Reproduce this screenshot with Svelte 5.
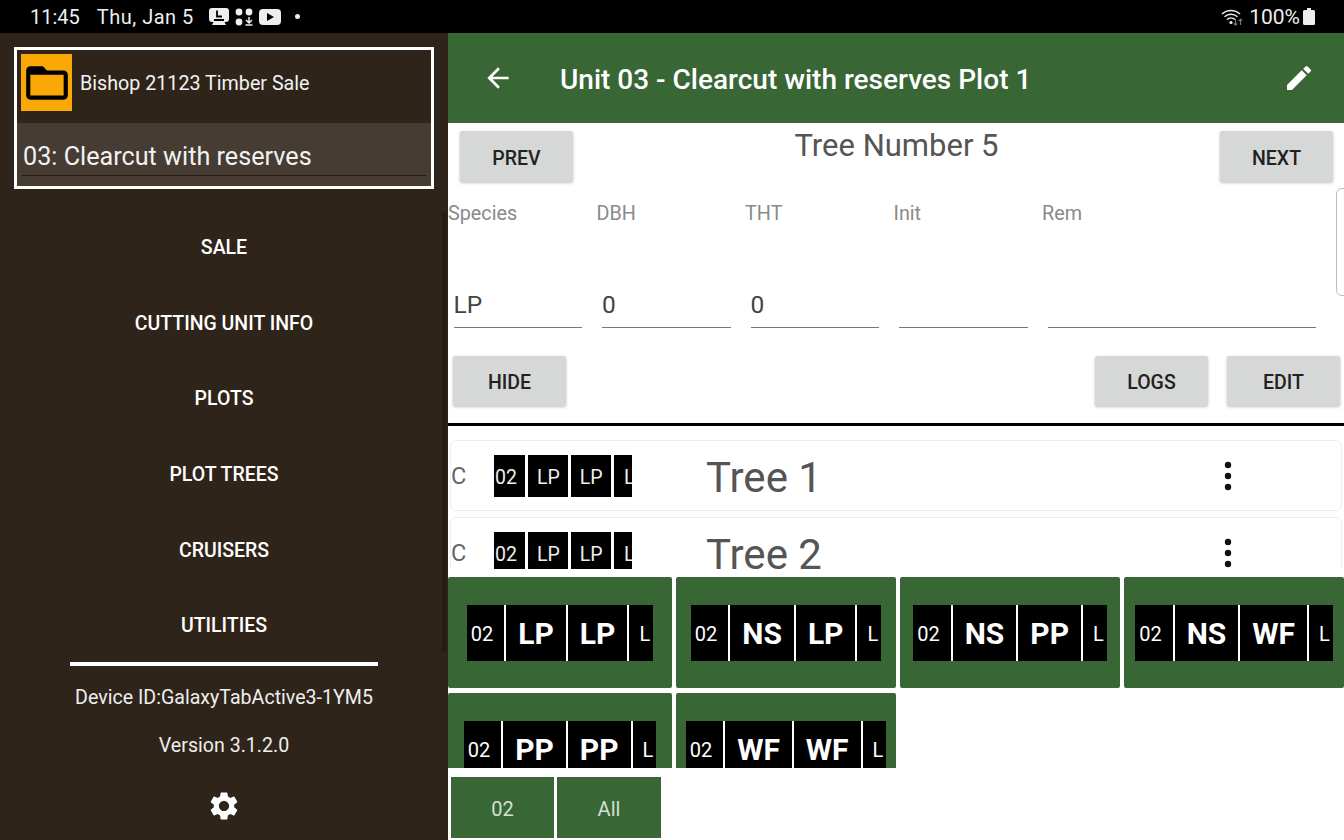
<script>
  const menu = ["SALE", "CUTTING UNIT INFO", "PLOTS", "PLOT TREES", "CRUISERS", "UTILITIES"];
  const fields = [
    { label: "Species", value: "LP" },
    { label: "DBH", value: "0" },
    { label: "THT", value: "0" },
    { label: "Init", value: "" },
    { label: "Rem", value: "" },
  ];
  const trees = ["Tree 1", "Tree 2"];
  const combos = [
    ["LP", "LP"],
    ["NS", "LP"],
    ["NS", "PP"],
    ["NS", "WF"],
    ["PP", "PP"],
    ["WF", "WF"],
  ];
</script>

<div class="page">
  <div class="status">
    <div class="status-left">
      <span class="time">11:45</span>
      <span class="date">Thu, Jan 5</span>
      <svg viewBox="0 0 20 17" width="20" height="17">
        <path d="M3 0h14a3 3 0 0 1 3 3v8a3 3 0 0 1-3 3h-1.500l1.500 3H3l1.500-3H3a3 3 0 0 1-3-3V3a3 3 0 0 1 3-3z" fill="#eee" />
        <path d="M8 2.500v6h5M5 12h10" stroke="#000" stroke-width="1.800" fill="none" />
      </svg>
      <svg viewBox="0 0 18 18" width="18" height="18">
        <circle cx="4" cy="4" r="3.400" fill="#eee" />
        <circle cx="14" cy="4" r="3.400" fill="#eee" />
        <circle cx="4" cy="14" r="3.400" fill="#eee" />
        <path d="M14 9v6M11 12l3 3 3-3M10.500 17h7" stroke="#eee" stroke-width="1.500" fill="none" />
      </svg>
      <svg viewBox="0 0 22 16" width="22" height="16">
        <rect width="22" height="16" rx="4" fill="#eee" />
        <path d="M8 4l7 4-7 4z" fill="#000" />
      </svg>
      <span class="dot"></span>
    </div>
    <div class="status-right">
      <svg viewBox="0 0 22 18" width="22" height="18">
        <path d="M1 6a13 13 0 0 1 18 0M3.500 8.800a9.500 9.500 0 0 1 13 0M6 11.500a6 6 0 0 1 8 0" stroke="#eee" stroke-width="1.500" fill="none" />
        <circle cx="10" cy="14.500" r="1.600" fill="#eee" />
        <path d="M14.500 11v6M12.800 15.400l1.700 1.800 1.700-1.800M19.500 17v-6M17.800 12.800l1.700-1.800 1.700 1.800" stroke="#777" stroke-width="1.200" fill="none" />
      </svg>
      <span class="pct">100%</span>
      <svg viewBox="0 0 12 17" width="12" height="17">
        <path d="M4 0h4v2h2.500a1.500 1.500 0 0 1 1.500 1.500V15.500a1.500 1.500 0 0 1-1.500 1.500h-9A1.500 1.500 0 0 1 0 15.500V3.500A1.500 1.500 0 0 1 1.500 2H4z" fill="#eee" />
      </svg>
    </div>
  </div>

  <div class="body">
    <aside class="drawer">
      <div class="sale-box">
        <div class="sale-row">
          <div class="folder">
            <svg viewBox="0 0 24 24" width="50" height="50">
              <path d="M20 6h-8l-2-2H4c-1.100 0-2 .9-2 2v12c0 1.100.9 2 2 2h16c1.100 0 2-.9 2-2V8c0-1.100-.9-2-2-2zm0 12H4V8h16v10z" fill="#000" />
            </svg>
          </div>
          <span class="sale-name">Bishop 21123 Timber Sale</span>
        </div>
        <div class="unit-row">
          <div class="unit-text">03: Clearcut with reserves</div>
        </div>
      </div>
      <nav class="menu">
        {#each menu as item}
          <div class="menu-item">{item}</div>
        {/each}
      </nav>
      <div class="divider"></div>
      <div class="device">Device ID:GalaxyTabActive3-1YM5</div>
      <div class="version">Version 3.1.2.0</div>
      <div class="gear">
        <svg viewBox="0 0 24 24" width="34" height="34">
          <path d="M19.140 12.940c.04-.3.06-.61.06-.94 0-.32-.02-.64-.07-.94l2.030-1.580a.49.49 0 0 0 .12-.61l-1.920-3.320a.488.488 0 0 0-.59-.22l-2.390.96c-.5-.38-1.030-.7-1.620-.94l-.36-2.540a.484.484 0 0 0-.48-.41h-3.840c-.24 0-.43.17-.47.41l-.36 2.540c-.59.24-1.130.57-1.620.94l-2.390-.96c-.22-.08-.47 0-.59.22L2.740 8.870c-.12.21-.08.47.12.61l2.030 1.580c-.05.3-.09.63-.09.94s.02.64.07.94l-2.030 1.580a.49.49 0 0 0-.12.61l1.920 3.320c.12.22.37.29.59.22l2.390-.96c.5.38 1.030.7 1.620.94l.36 2.540c.05.24.24.41.48.41h3.840c.24 0 .44-.17.47-.41l.36-2.540c.59-.24 1.130-.56 1.620-.94l2.390.96c.22.08.47 0 .59-.22l1.920-3.320c.12-.22.07-.47-.12-.61l-2.010-1.580zM12 15.600c-1.980 0-3.600-1.620-3.600-3.600s1.620-3.600 3.600-3.600 3.600 1.620 3.600 3.600-1.620 3.600-3.600 3.600z" fill="#fff" />
        </svg>
      </div>
      <div class="drawer-scroll"></div>
    </aside>

    <main class="main">
      <header class="appbar">
        <svg viewBox="0 0 24 24" width="32" height="32">
          <path d="M20 11H7.830l5.590-5.590L12 4l-8 8 8 8 1.410-1.410L7.830 13H20v-2z" fill="#fff" />
        </svg>
        <h1>Unit 03 - Clearcut with reserves Plot 1</h1>
        <svg class="pencil" viewBox="0 0 24 24" width="32" height="32">
          <path d="M3 17.250V21h3.750L17.810 9.940l-3.750-3.750L3 17.250zM20.710 7.040a.996.996 0 0 0 0-1.410l-2.340-2.340a.996.996 0 0 0-1.410 0l-1.830 1.830 3.750 3.750 1.830-1.830z" fill="#fff" />
        </svg>
      </header>

      <section class="form">
        <div class="nav-row">
          <button>PREV</button>
          <div class="title">Tree Number 5</div>
          <button>NEXT</button>
        </div>
        <div class="fields">
          {#each fields as f}
            <div class="field">
              <div class="label">{f.label}</div>
              <div class="value">{f.value}</div>
            </div>
          {/each}
        </div>
        <div class="action-row">
          <button>HIDE</button>
          <div class="spacer"></div>
          <button>LOGS</button>
          <button>EDIT</button>
        </div>
        <div class="edge-box"></div>
      </section>

      <section class="tree-list">
        {#each trees as tree}
          <div class="tree-card">
            <span class="tree-c">C</span>
            <div class="mini">
              <span class="m-code">02</span>
              <span class="m-sp">LP</span>
              <span class="m-sp">LP</span>
              <span class="m-tail">L</span>
            </div>
            <span class="tree-name">{tree}</span>
            <svg class="kebab" viewBox="0 0 8 30" width="8" height="30">
              <circle cx="4" cy="4" r="3.200" fill="#111" />
              <circle cx="4" cy="15" r="3.200" fill="#111" />
              <circle cx="4" cy="26" r="3.200" fill="#111" />
            </svg>
          </div>
        {/each}
      </section>

      <section class="combos">
        {#each combos as c, i}
          <div class="combo" class:wide={i === 0 || i === 4}>
            <div class="chips">
              <span class="code">02</span>
              <span class="sp">{c[0]}</span>
              <span class="sp">{c[1]}</span>
              <span class="tail">L</span>
            </div>
          </div>
        {/each}
      </section>

      <section class="tabs">
        <div class="tab">02</div>
        <div class="tab">All</div>
      </section>
    </main>
  </div>
</div>

<style>
  :global(body) {
    margin: 0;
    background: #fff;
  }

  .page {
    width: 1344px;
    height: 840px;
    overflow: hidden;
    font-family: Roboto, "Liberation Sans", sans-serif;
  }

  .status {
    height: 33px;
    background: #000;
    color: #eee;
    display: flex;
    justify-content: space-between;
    align-items: center;
    font-size: 20px;
    padding: 0 29px 0 30px;
  }

  .status-left,
  .status-right {
    display: flex;
    align-items: center;
  }

  .status-left svg {
    margin-right: 6px;
  }

  .date {
    margin: 0 15px 0 17px;
    letter-spacing: 0.5px;
  }

  .dot {
    width: 5px;
    height: 5px;
    border-radius: 50%;
    background: #eee;
    margin-left: 8px;
  }

  .pct {
    margin: 0 3px 0 6px;
    font-size: 21px;
  }

  .body {
    display: flex;
    height: 807px;
  }

  .drawer {
    width: 448px;
    flex-shrink: 0;
    background: #2f2419;
    color: #fff;
    box-sizing: border-box;
    padding-top: 14px;
    display: flex;
    flex-direction: column;
    align-items: center;
    position: relative;
  }

  .drawer-scroll {
    position: absolute;
    right: 1px;
    top: 179px;
    width: 5px;
    height: 440px;
    background: #261c12;
  }

  .sale-box {
    width: 420px;
    height: 142px;
    box-sizing: border-box;
    border: 3px solid #fff;
    color: #f2f2f2;
  }

  .sale-row {
    height: 73px;
    box-sizing: border-box;
    padding: 0 0 8px 4px;
    display: flex;
    align-items: center;
    gap: 8px;
    font-size: 19.700px;
  }

  .sale-name {
    padding-top: 2px;
  }

  .folder {
    width: 51px;
    height: 57px;
    background: #f9a806;
    display: flex;
    align-items: center;
    justify-content: center;
  }

  .unit-row {
    height: 63px;
    background: #463c33;
    box-sizing: border-box;
    padding: 14px 5px 0;
  }

  .unit-text {
    font-size: 25.200px;
    line-height: 37px;
    padding: 1px 0 0 1px;
    border-bottom: 1.500px solid #241c13;
  }

  .menu {
    margin-top: 20px;
    width: 100%;
  }

  .menu-item {
    height: 75.600px;
    box-sizing: border-box;
    padding-top: 2px;
    display: flex;
    align-items: center;
    justify-content: center;
    font-size: 19.500px;
    font-weight: 500;
  }

  .divider {
    width: 308px;
    height: 4px;
    margin-top: -1px;
    background: #fff;
    flex-shrink: 0;
  }

  .device,
  .version {
    font-size: 19.600px;
    color: #eee;
    line-height: 24px;
  }

  .device {
    margin-top: 20px;
  }

  .version {
    margin-top: 24px;
  }

  .gear {
    margin-top: 31px;
    height: 34px;
  }

  .main {
    flex: 1;
    min-width: 0;
    display: flex;
    flex-direction: column;
  }

  .appbar {
    height: 90px;
    flex-shrink: 0;
    background: #386635;
    display: flex;
    align-items: center;
    padding: 0 29px 0 34px;
    color: #fff;
  }

  .appbar h1 {
    margin: 3px 0 0 46px;
    font-size: 28px;
    font-weight: 500;
    flex: 1;
  }

  .form {
    height: 303px;
    flex-shrink: 0;
    box-sizing: border-box;
    border-bottom: 3px solid #000;
    position: relative;
    display: flex;
    flex-direction: column;
  }

  button {
    width: 113px;
    height: 51px;
    border: none;
    border-radius: 2px;
    background: #d6d7d7;
    color: #222;
    font-family: inherit;
    font-size: 19.500px;
    font-weight: 500;
    box-shadow: 0 1px 3px rgba(0, 0, 0, 0.25);
    padding: 2px 0 0;
  }

  .nav-row button {
    padding-top: 3px;
  }

  .nav-row {
    display: flex;
    justify-content: space-between;
    padding: 8px 11px 0 12px;
  }

  .title {
    font-size: 31px;
    color: #555;
    line-height: 30px;
  }

  .fields {
    display: grid;
    grid-template-columns: repeat(4, 148.500px) 302px;
    margin-top: 21px;
  }

  .field:last-child .value {
    margin-right: 28px;
  }

  .label {
    font-size: 19.800px;
    line-height: 22px;
    color: #8a8a8a;
  }

  .value {
    margin: 59px 14.500px 0 5.500px;
    height: 44px;
    box-sizing: border-box;
    font-size: 24.500px;
    line-height: 42px;
    color: #444;
    border-bottom: 1.500px solid #777;
  }

  .action-row {
    display: flex;
    gap: 19px;
    padding: 28px 4px 0 5px;
  }

  .action-row button {
    height: 50px;
  }

  .spacer {
    flex: 1;
  }

  .edge-box {
    position: absolute;
    left: 888px;
    top: 65px;
    width: 20px;
    height: 108px;
    box-sizing: border-box;
    border: 1.500px solid #bbb;
    border-radius: 6px;
  }

  .tree-list {
    height: 143px;
    flex-shrink: 0;
    overflow: hidden;
    padding: 14px 2px 0;
    box-sizing: border-box;
    margin-bottom: 8px;
  }

  .tree-card {
    height: 71px;
    box-sizing: border-box;
    border: 1px solid #eee;
    border-radius: 6px;
    margin-bottom: 6px;
    display: flex;
    align-items: center;
  }

  .tree-c {
    width: 43px;
    font-size: 23.500px;
    color: #666;
    box-sizing: border-box;
  }

  .mini {
    display: flex;
    gap: 3px;
    height: 42px;
    width: 138px;
    overflow: hidden;
    font-size: 19.500px;
    color: #eee;
  }

  .mini span {
    background: #000;
    line-height: 46px;
    height: 42px;
    box-sizing: border-box;
  }

  .m-code {
    padding: 0 8.500px 0 1px;
  }

  .m-sp {
    padding: 0 8.500px;
  }

  .m-tail {
    padding-left: 10px;
    padding-right: 4px;
  }

  .tree-name {
    margin-left: 74px;
    font-size: 42px;
    line-height: 48px;
    margin-top: 4px;
    color: #555;
    flex: 1;
  }

  .kebab {
    margin-right: 109px;
  }

  .combos {
    height: 191px;
    flex-shrink: 0;
    overflow: hidden;
    display: flex;
    flex-wrap: wrap;
    gap: 5px 4px;
    align-content: flex-start;
  }

  .combo {
    width: 220px;
    height: 111px;
    background: #386635;
    border-radius: 2px;
    display: flex;
    align-items: center;
    justify-content: center;
  }

  .combo.wide {
    width: 224px;
  }

  .chips {
    display: flex;
    gap: 2px;
    height: 56px;
    background: #fff;
    color: #fff;
  }

  .chips span {
    background: #000;
    display: flex;
    align-items: center;
    box-sizing: border-box;
  }

  .code {
    font-size: 20px;
    padding: 2px 11px 0 4px;
  }

  .sp {
    font-size: 30px;
    font-weight: 700;
    padding: 2px 12px 0;
  }

  .tail {
    font-size: 20px;
    padding: 2px 3px 0 10px;
  }

  .tabs {
    display: flex;
    gap: 3px;
    padding: 9px 0 0 3px;
  }

  .tab {
    width: 103px;
    height: 61px;
    box-sizing: border-box;
    padding-top: 2px;
    background: #386635;
    color: #d4e0d2;
    font-size: 20px;
    display: flex;
    align-items: center;
    justify-content: center;
  }

  .tab:last-child {
    width: 104px;
  }
</style>
